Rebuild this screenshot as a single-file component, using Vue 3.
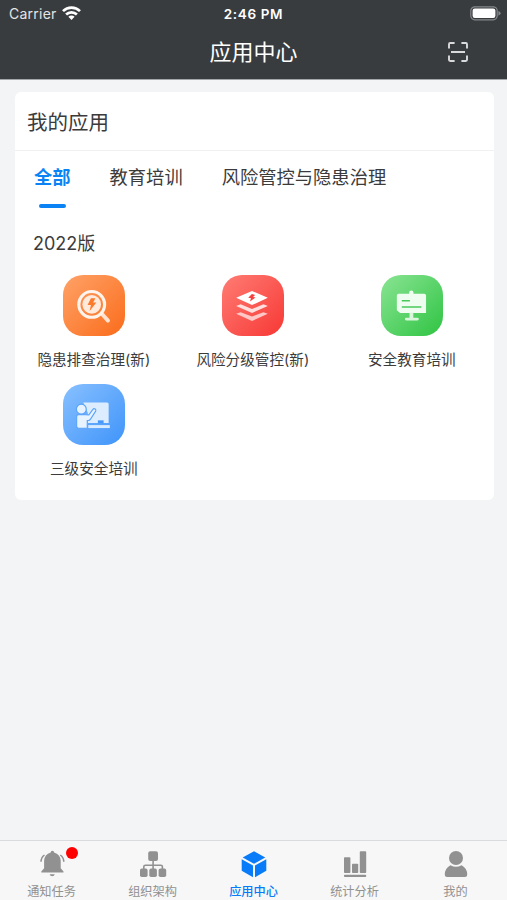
<script setup>
import { ref } from "vue";

const categories = ["全部", "教育培训", "风险管控与隐患治理"];
const activeCategory = ref(0);

const apps = [
  { name: "隐患排查治理(新)", icon: "search", color: "orange" },
  { name: "风险分级管控(新)", icon: "layers", color: "red" },
  { name: "安全教育培训", icon: "board", color: "green" },
  { name: "三级安全培训", icon: "teacher", color: "blue" },
];

const tabs = [
  { name: "通知任务", icon: "bell", dot: true },
  { name: "组织架构", icon: "org" },
  { name: "应用中心", icon: "cube" },
  { name: "统计分析", icon: "chart" },
  { name: "我的", icon: "user" },
];
const activeTab = ref(2);
</script>

<template>
  <div class="page">
    <header class="header">
      <div class="status">
        <div class="carrier">
          <span>Carrier</span>
          <svg class="wifi" width="19" height="14" viewBox="0 0 19 14">
            <g fill="none" stroke="#fff" stroke-width="2.7">
              <path d="M1 5.1a12.2 12.2 0 0 1 17 0" />
              <path d="M4.1 8.5a7.7 7.7 0 0 1 10.8 0" />
            </g>
            <path d="M6.4 10.8a4.4 4.4 0 0 1 6.2 0L9.5 14z" fill="#fff" />
          </svg>
        </div>
        <div class="time">2:46 PM</div>
        <div class="battery">
          <svg width="31" height="15" viewBox="0 0 31 15">
            <rect x="0.8" y="0.8" width="26.4" height="13" rx="4" fill="none" stroke="#85888a" stroke-width="1.2" />
            <rect x="2.6" y="2.6" width="22.8" height="9.4" rx="2.2" fill="#fff" />
            <path d="M28.4 4.9q2.2 1 2.2 2.4t-2.2 2.4z" fill="#85888a" />
          </svg>
        </div>
      </div>
      <div class="nav">
        <h1>应用中心</h1>
        <svg class="scan" width="22" height="22" viewBox="0 0 22 22">
          <g fill="none" stroke="#d9dadb" stroke-width="1.9">
            <path d="M2 7.6V3.2Q2 2 3.2 2H7.6M14.4 2h4.4Q20 2 20 3.2v4.4M20 14.4v4.4q0 1.2-1.2 1.2h-4.4M7.6 20H3.2Q2 20 2 18.8v-4.4M4 11h14" />
          </g>
        </svg>
      </div>
    </header>

    <main class="content">
      <section class="card">
        <h2>我的应用</h2>
        <div class="categories">
          <div
            v-for="(item, index) in categories"
            :key="item"
            class="category"
            :class="{ active: index === activeCategory }"
            @click="activeCategory = index"
          >
            {{ item }}
          </div>
        </div>
        <h3>2022版</h3>
        <div class="apps">
          <div v-for="app in apps" :key="app.name" class="app">
            <div class="app-icon" :class="app.color">
              <svg v-if="app.icon === 'search'" viewBox="0 0 62 62">
                <path d="M39.4 39.4l6 6.6" stroke="#ffe3d0" stroke-width="4" stroke-linecap="round" />
                <circle cx="29" cy="29.7" r="13" fill="none" stroke="#fff4ec" stroke-width="3.2" />
                <circle cx="29" cy="29.7" r="9.4" fill="#ffeadb" />
                <path d="M28.2 23.4h4.5l-2.2 4.3h3.2l-6.8 8.6 1.3-6.1h-3.4z" fill="#fb7b2d" />
              </svg>
              <svg v-else-if="app.icon === 'layers'" viewBox="0 0 62 62">
                <path d="M14.3 39.2l4.5-1.7L30.3 42l11.5-4.5 4.5 1.7-16 7.2z" fill="#ffc7c5" />
                <path d="M14.3 31.2l4.5-1.7 11.5 4.9 11.5-4.9 4.5 1.7-16 7.2z" fill="#ffdedd" />
                <path d="M14.3 23.1l16-7 16 7-16 7.3z" fill="#fff" />
                <path d="M30.2 19.3l3.2.8-2 2.1 2.5.5-5.7 4 1.1-3.1-2.8-.5z" fill="#f5413f" />
              </svg>
              <svg v-else-if="app.icon === 'board'" viewBox="0 0 62 62">
                <path d="M28.4 19v-1.1a2.2 2.2 0 0 1 4.4 0V19h10.9q1.8 0 1.8 1.8v17.7H19.3L16 35.7V20.8q0-1.8 1.8-1.8z" fill="#effcf0" />
                <path d="M30.7 38v6" stroke="#d9f6dc" stroke-width="3.8" />
                <path d="M25.5 44.5h11.3" stroke="#d9f6dc" stroke-width="2.8" stroke-linecap="round" />
                <path d="M21 26.1h8.2M21 32.2h19.8" stroke="#49c95b" stroke-width="1.5" />
              </svg>
              <svg v-else viewBox="0 0 62 62">
                <path d="M20.5 18.6h24q1.6 0 1.6 1.6v19.3H25V29z" fill="#dcedff" />
                <path d="M35.2 39.7v-3h5.8v3z" fill="#4a98f7" />
                <path d="M25.5 43h21.8" stroke="#d8eaff" stroke-width="3" />
                <path d="M15.8 31h7.1l3.2.2 4.1-5.6q1-1.2 2.3-.3 1.2.9.5 2.1l-5.2 8.1q-.8 1.3-2.2 1.3h-1.1v7.9h-8.7q-2 0-2-2V33q0-2 2-2z" fill="#e7f3ff" stroke="#5aa3fa" stroke-width="1.1" />
                <circle cx="18.5" cy="25.4" r="5" fill="#e7f3ff" stroke="#5aa3fa" stroke-width="1.2" />
              </svg>
            </div>
            <div class="app-name">{{ app.name }}</div>
          </div>
        </div>
      </section>
    </main>

    <footer class="tabbar">
      <div
        v-for="(tab, index) in tabs"
        :key="tab.name"
        class="tab"
        :class="{ active: index === activeTab }"
        @click="activeTab = index"
      >
        <div class="tab-icon">
          <svg width="30" height="28" viewBox="0 0 30 28" fill="currentColor">
            <g v-if="tab.icon === 'bell'">
              <path d="M13.7 2.4a1.7 1.7 0 0 1 3.4 0q6.3 1.7 6.6 8.4v7.4l2.8 3.2v1.2H4.3v-1.2l2.8-3.2v-7.4q.3-6.7 6.6-8.4z" />
              <path d="M12.6 24.2h5.2q-.6 2.1-2.6 2.1t-2.6-2.1z" />
              <path d="M7.5 5q-3.3 2.2-3.5 6.8M23.3 5q3.3 2.2 3.5 6.8" fill="none" stroke="currentColor" stroke-width="1.5" />
            </g>
            <g v-else-if="tab.icon === 'org'">
              <rect x="10.2" y="1.3" width="9.8" height="9.6" rx="2" />
              <rect x="2" y="18.6" width="7.6" height="8.4" rx="1.8" />
              <rect x="11.3" y="18.6" width="7.6" height="8.4" rx="1.8" />
              <rect x="20.6" y="18.6" width="7.6" height="8.4" rx="1.8" />
              <path d="M15.1 10v9.5M5.8 19.5v-2.7q0-1.6 1.6-1.6h15.4q1.6 0 1.6 1.6v2.7" fill="none" stroke="currentColor" stroke-width="1.6" />
            </g>
            <g v-else-if="tab.icon === 'cube'">
              <path d="M15 1.2l11.3 6.3L15 13.8 3.7 7.5z" />
              <path d="M2.7 9.3l11.3 6.3v11.6L2.7 20.8zM27.3 9.3L16 15.6v11.6l11.3-6.4z" />
            </g>
            <g v-else-if="tab.icon === 'chart'">
              <rect x="4" y="7.2" width="6.4" height="15.8" rx="0.8" />
              <rect x="12" y="13.8" width="6.2" height="9.2" rx="0.8" />
              <rect x="19.8" y="1.2" width="6.4" height="21.8" rx="0.8" />
              <rect x="4" y="24.8" width="22.2" height="2.2" rx="0.8" />
            </g>
            <g v-else>
              <circle cx="15" cy="8" r="7" />
              <path d="M3.8 24.4q0-6.2 5.7-9.2 5.5 3.1 11 0 5.7 3 5.7 9.2 0 2.5-2.5 2.5H6.3q-2.5 0-2.5-2.5z" />
            </g>
          </svg>
          <i v-if="tab.dot" class="dot"></i>
        </div>
        <span>{{ tab.name }}</span>
      </div>
    </footer>
  </div>
</template>

<style>
body {
  margin: 0;
}
</style>

<style scoped>
.page {
  display: flex;
  flex-direction: column;
  height: 900px;
  background: #f2f4f6;
  color: #3b3b3b;
  font-family: Inter, "Noto Sans CJK SC", sans-serif;
}

h1,
h2,
h3 {
  margin: 0;
  font-weight: 400;
}

.header {
  height: 79px;
  background: #393c3f;
  border-bottom: 1px solid #a4a7a9;
  color: #fff;
}

.status {
  display: grid;
  grid-template-columns: 1fr auto 1fr;
  align-items: center;
  height: 27px;
  padding: 0 6px 0 9px;
}

.carrier {
  display: flex;
  align-items: center;
  gap: 5px;
  color: #e4e5e5;
  font-size: 14px;
  letter-spacing: 0.25px;
}

.wifi {
  margin-top: -2px;
}

.time {
  margin-right: 3px;
  font-size: 13.5px;
  font-weight: 600;
  letter-spacing: 0.65px;
}

.battery {
  display: flex;
  justify-content: flex-end;
}

.nav {
  display: grid;
  grid-template-columns: 1fr auto 1fr;
  align-items: center;
  height: 50px;
}

.nav h1 {
  grid-column: 2;
  font-size: 22px;
  line-height: 50px;
}

.scan {
  justify-self: end;
  margin-right: 38px;
}

.content {
  flex: 1;
  padding: 12px 13px 0 15px;
}

.card {
  height: 408px;
  background: #fff;
  border-radius: 6px;
}

.card h2 {
  height: 58px;
  padding-left: 12px;
  border-bottom: 1px solid #f1f1f2;
  font-size: 20.5px;
  line-height: 61px;
}

.categories {
  display: flex;
  gap: 39px;
  padding-left: 19px;
}

.category {
  display: flex;
  flex-direction: column;
  align-items: center;
  height: 57px;
  font-size: 18.3px;
  line-height: 53px;
  white-space: nowrap;
}

.category.active {
  color: #0b83f5;
  font-weight: 700;
}

.category.active::after {
  content: "";
  width: 27px;
  height: 4px;
  border-radius: 2px;
  background: #0b83f5;
}

.card h3 {
  height: 67px;
  padding-left: 18px;
  font-size: 18px;
  line-height: 71px;
}

.apps {
  display: grid;
  grid-template-columns: repeat(3, 159px);
  grid-auto-rows: 109px;
  margin-left: -0.7px;
}

.app {
  display: flex;
  flex-direction: column;
  align-items: center;
}

.app-icon {
  width: 61.4px;
  height: 61.4px;
  border-radius: 20px;
}

.app-icon svg {
  display: block;
  width: 61.4px;
  height: 61.4px;
}

.orange {
  background: linear-gradient(135deg, #ffa268, #fa6c1b);
}

.red {
  background: linear-gradient(135deg, #ff7c74, #f73835);
}

.green {
  background: linear-gradient(135deg, #8ae493, #2fc443);
}

.blue {
  background: linear-gradient(135deg, #88c0ff, #3f94fa);
}

.app-name {
  margin-top: 13px;
  font-size: 14.6px;
  line-height: 22px;
  white-space: nowrap;
}

.tabbar {
  display: flex;
  height: 59px;
  padding: 0 1px;
  border-top: 1px solid #dadbdc;
  background: #f7f7f7;
}

.tab {
  display: flex;
  flex: 1;
  flex-direction: column;
  align-items: center;
  color: #919191;
  font-size: 12.2px;
  line-height: 18px;
}

.tab.active {
  color: #087cf8;
  font-weight: 500;
}

.tab-icon {
  position: relative;
  height: 28px;
  margin: 8.5px 0 5px;
}

.tab-icon svg {
  display: block;
}

.dot {
  position: absolute;
  top: -3px;
  right: -11.5px;
  width: 12.5px;
  height: 12.5px;
  border-radius: 50%;
  background: #fe0000;
}
</style>
